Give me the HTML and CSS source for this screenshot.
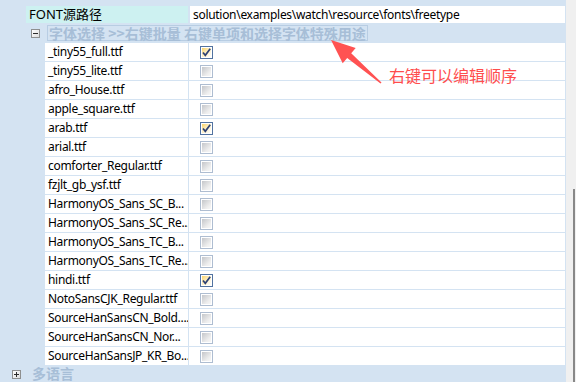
FILE: index.html
```html
<!DOCTYPE html>
<html lang="zh-CN">
<head>
  <meta charset="UTF-8">
  <title>字体属性</title>
  <link rel="stylesheet" href="styles.css">
</head>
<body>
  <div class="window">
    <div class="grid">
      <div class="prop-row">
        <div class="prop-name">FONT源路径</div>
        <div class="prop-value">solution\examples\watch\resource\fonts\freetype</div>
      </div>

      <div class="group sub">
        <span class="toggle minus"></span>
        <span class="group-title focused">字体选择 &gt;&gt;右键批量 右键单项和选择字体特殊用途</span>
      </div>

      <div class="rows">
        <div class="row"><div class="name">_tiny55_full.ttf</div><div class="value"><span class="cb checked"><svg viewBox="0 0 11 11"><path d="M2 5.5 L4.3 8.3 L9.2 1.8" /></svg></span></div></div>
        <div class="row"><div class="name">_tiny55_lite.ttf</div><div class="value"><span class="cb"></span></div></div>
        <div class="row"><div class="name">afro_House.ttf</div><div class="value"><span class="cb"></span></div></div>
        <div class="row"><div class="name">apple_square.ttf</div><div class="value"><span class="cb"></span></div></div>
        <div class="row"><div class="name">arab.ttf</div><div class="value"><span class="cb checked"><svg viewBox="0 0 11 11"><path d="M2 5.5 L4.3 8.3 L9.2 1.8" /></svg></span></div></div>
        <div class="row"><div class="name">arial.ttf</div><div class="value"><span class="cb"></span></div></div>
        <div class="row"><div class="name">comforter_Regular.ttf</div><div class="value"><span class="cb"></span></div></div>
        <div class="row"><div class="name">fzjlt_gb_ysf.ttf</div><div class="value"><span class="cb"></span></div></div>
        <div class="row"><div class="name">HarmonyOS_Sans_SC_B...</div><div class="value"><span class="cb"></span></div></div>
        <div class="row"><div class="name">HarmonyOS_Sans_SC_Re...</div><div class="value"><span class="cb"></span></div></div>
        <div class="row"><div class="name">HarmonyOS_Sans_TC_B...</div><div class="value"><span class="cb"></span></div></div>
        <div class="row"><div class="name">HarmonyOS_Sans_TC_Re...</div><div class="value"><span class="cb"></span></div></div>
        <div class="row"><div class="name">hindi.ttf</div><div class="value"><span class="cb checked"><svg viewBox="0 0 11 11"><path d="M2 5.5 L4.3 8.3 L9.2 1.8" /></svg></span></div></div>
        <div class="row"><div class="name">NotoSansCJK_Regular.ttf</div><div class="value"><span class="cb"></span></div></div>
        <div class="row"><div class="name">SourceHanSansCN_Bold....</div><div class="value"><span class="cb"></span></div></div>
        <div class="row"><div class="name">SourceHanSansCN_Nor...</div><div class="value"><span class="cb"></span></div></div>
        <div class="row"><div class="name">SourceHanSansJP_KR_Bo...</div><div class="value"><span class="cb"></span></div></div>
      </div>

      <div class="group top">
        <span class="toggle plus"></span>
        <span class="group-title">多语言</span>
      </div>
    </div>

    <div class="scrollbar"><div class="thumb"></div></div>

    <!-- annotation drawn over the grid -->
    <svg class="arrow" width="576" height="382" viewBox="0 0 576 382">
      <polygon points="331,40 355.7,48 351.2,53.3 381.5,82.4 380.5,83.6 347.2,57.9 342.7,63.2" />
    </svg>
    <div class="note">右键可以编辑顺序</div>
  </div>
</body>
</html>
```

FILE: styles.css
```css
body {
  margin: 0;
  font-family: 'Noto Sans', 'Noto Sans CJK SC', sans-serif;
  font-size: 12px;
  color: #000;
  background: #f0f0f0;
}

.window {
  position: relative;
  display: flex;
  width: 576px;
  height: 382px;
  overflow: hidden;
}

.grid {
  width: 566px;
  background: #d4e3f2;
  padding-top: 6px;
  box-sizing: border-box;
}

/* property row on top */
.prop-row {
  display: flex;
  height: 17px;
  margin-left: 26px;
  margin-right: 1px;
}

.prop-name {
  width: 159px;
  padding-left: 3px;
  background: #cdf1f1;
  font-size: 13px;
  line-height: 17px;
  margin-right: 2px;
}

.prop-value {
  flex: 1;
  background: #fff;
  padding-left: 3px;
  line-height: 17px;
  letter-spacing: -0.3px;
}

/* group headers */
.group {
  display: flex;
  align-items: center;
  height: 20px;
}

.group.sub {
  padding-left: 31px;
}

.group.top {
  align-items: flex-start;
  height: 16px;
  padding-left: 12px;
}

.toggle {
  position: relative;
  width: 9px;
  height: 9px;
  box-sizing: border-box;
  border: 1px solid #8e8f8f;
  background: linear-gradient(135deg, #ffffff, #dcdcdc);
}

.toggle::before {
  content: "";
  position: absolute;
  left: 1px;
  top: 3px;
  width: 5px;
  height: 1px;
  background: #2b2b2b;
}

.toggle.plus::after {
  content: "";
  position: absolute;
  left: 3px;
  top: 1px;
  width: 1px;
  height: 5px;
  background: #2b2b2b;
}

.group.sub .toggle {
  margin-right: 7px;
}

.group.top .toggle {
  margin: 4px 10px 0 0;
}

.group-title {
  font-family: 'Noto Sans CJK SC', sans-serif;
  font-weight: bold;
  font-size: 14px;
  color: #a7bed7;
  line-height: 14px;
  padding: 0 1px;
  border: 1px solid transparent;
}

.group-title.focused {
  border-color: #b8cde3;
}

.group.top .group-title {
  line-height: 15px;
  border: none;
}

/* file rows */
.rows {
  margin-left: 45px;
  margin-right: 1px;
}

.row {
  display: flex;
  height: 18px;
  border-bottom: 1px solid #d4e3f2;
  background: #fff;
}

.row .name {
  width: 140px;
  padding-left: 3px;
  line-height: 18px;
  letter-spacing: -0.3px;
  white-space: nowrap;
  overflow: hidden;
  border-right: 1px solid #d4e3f2;
}

.row .value {
  flex: 1;
  display: flex;
  align-items: center;
  padding-left: 11px;
}

.cb {
  display: block;
  width: 13px;
  height: 13px;
  box-sizing: border-box;
  border: 1px solid #aebdd1;
  padding: 1px;
  background: #fff;
  margin-top: 1px;
}

.cb::before {
  content: "";
  display: block;
  width: 9px;
  height: 9px;
  background: linear-gradient(135deg, #c4c6ca, #eeeeee 70%, #f7f7f7);
}

.cb.checked {
  position: relative;
  border-color: #5273a0;
}

.cb.checked::before {
  background: linear-gradient(135deg, #f9d36a, #fdf0c8 50%, #ffffff);
}

.cb svg {
  position: absolute;
  left: 0;
  top: 0;
  width: 11px;
  height: 11px;
  fill: none;
  stroke: #2d4173;
  stroke-width: 1.7;
}

/* scrollbar */
.scrollbar {
  position: relative;
  width: 10px;
  background: #f0f0f0;
}

.thumb {
  margin: 189px 0 0 7px;
  width: 2px;
  height: 193px;
  background: #888;
}

/* red annotation */
.arrow {
  position: absolute;
  left: 0;
  top: 0;
  pointer-events: none;
  fill: #ff5252;
}

.note {
  position: absolute;
  left: 389px;
  top: 63px;
  font-family: 'Noto Sans CJK SC', sans-serif;
  font-size: 16px;
  color: #ff4d4d;
  white-space: nowrap;
}
```
